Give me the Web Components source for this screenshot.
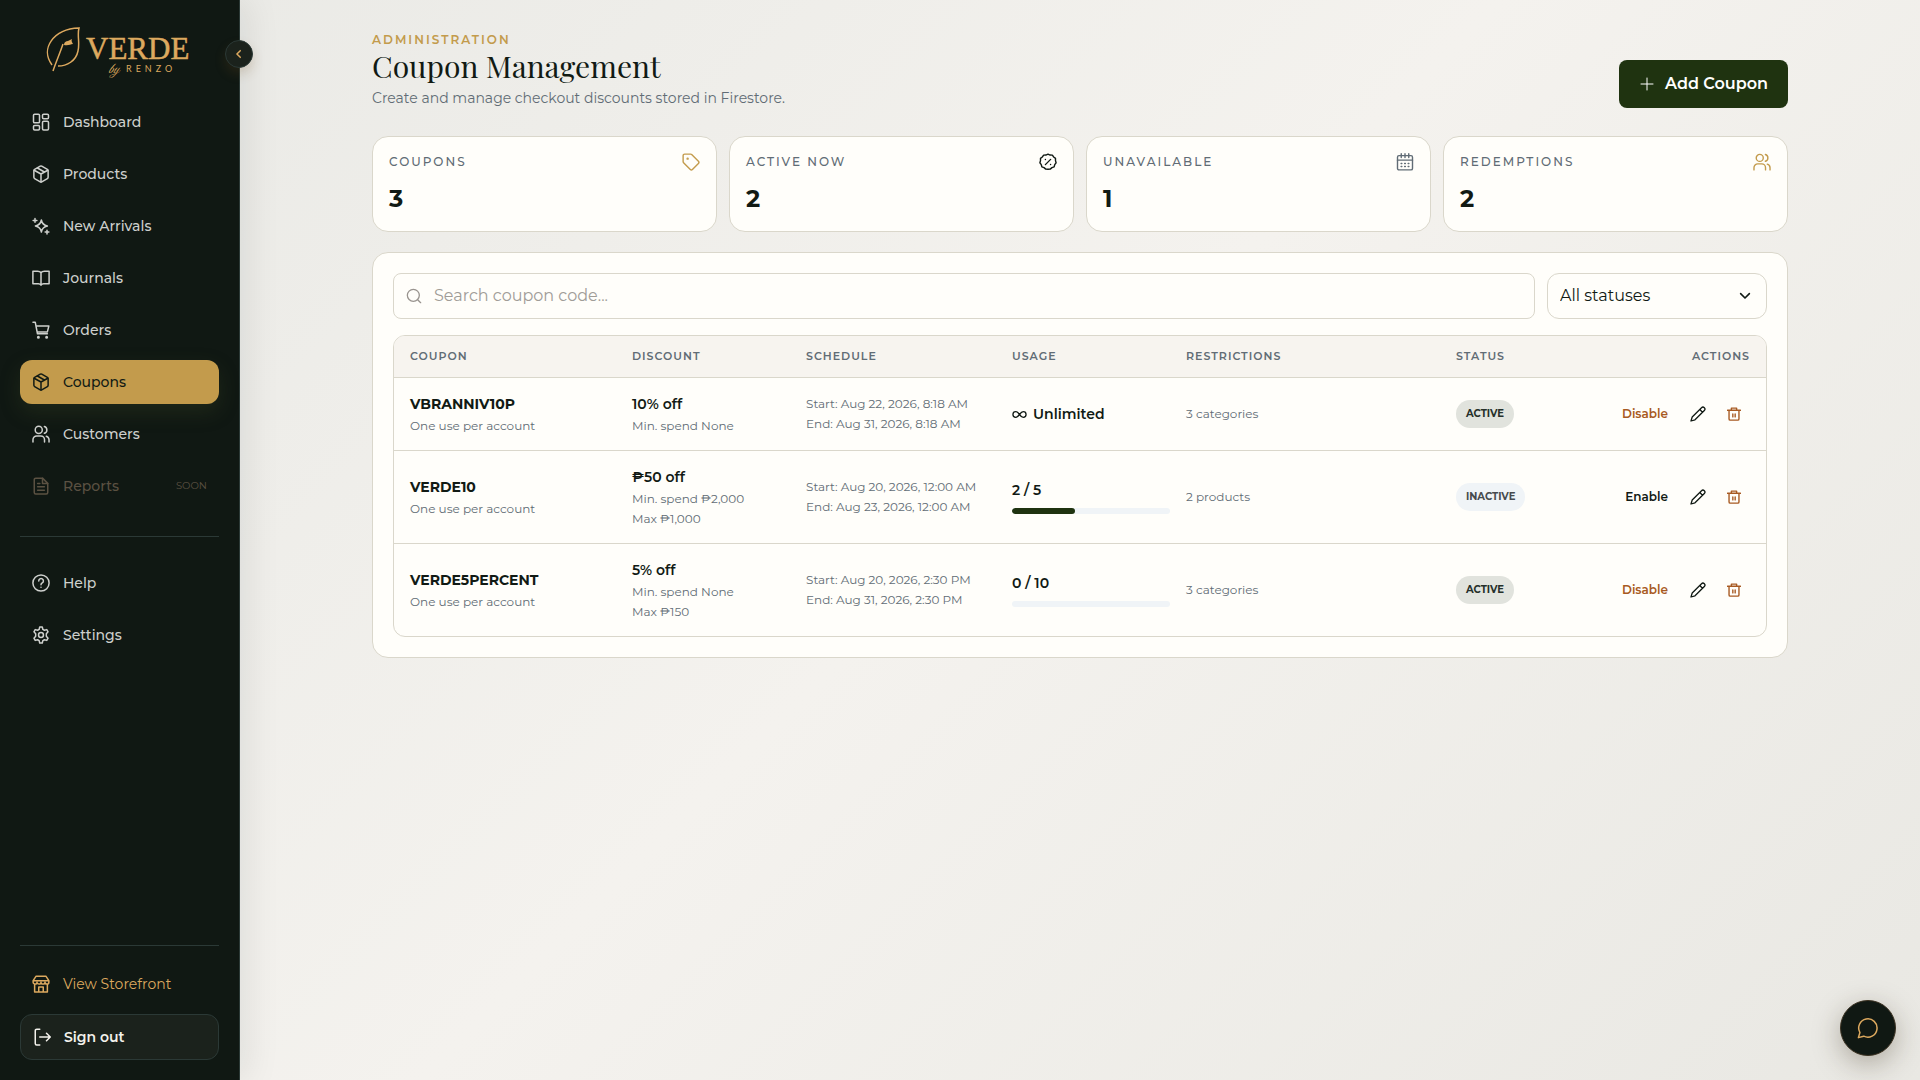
<!DOCTYPE html>
<html lang="en">
<head>
<meta charset="utf-8">
<meta name="viewport" content="width=device-width, initial-scale=1">
<title>Coupon Management - Verde by Renzo</title>
<style>
  :root {
    --ink: #111a14;
    --leaf: #1f3310;
    --gold: #c39b4c;
    --gold-light: #dda95f;
    --muted: #616c75;
    --line: #dad7cb;
    --card: #fffefa;
    --rust: #a85a22;
    --mist: #f0f4f7;
  }

  body {
    margin: 0;
    color: var(--ink);
    font-family: Montserrat, Inter, "Open Sans", sans-serif;
    font-size: 14px;
    line-height: 20px;
  }
</style>
</head>
<body>

<admin-shell>
  <side-bar slot="sidebar">
    <nav-item icon="dashboard">Dashboard</nav-item>
    <nav-item icon="box">Products</nav-item>
    <nav-item icon="sparkles">New Arrivals</nav-item>
    <nav-item icon="book">Journals</nav-item>
    <nav-item icon="cart">Orders</nav-item>
    <nav-item icon="box" active>Coupons</nav-item>
    <nav-item icon="users">Customers</nav-item>
    <nav-item icon="file" disabled note="SOON">Reports</nav-item>
    <nav-item slot="support" icon="help">Help</nav-item>
    <nav-item slot="support" icon="gear">Settings</nav-item>
    <nav-item slot="footer" icon="store" gold>View Storefront</nav-item>
    <sign-out slot="footer">Sign out</sign-out>
  </side-bar>

  <page-header>
    <span slot="eyebrow">ADMINISTRATION</span>
    <span slot="title">Coupon Management</span>
    <span slot="lead">Create and manage checkout discounts stored in Firestore.</span>
    <span slot="action">Add Coupon</span>
  </page-header>

  <stat-row>
    <stat-card icon="tag" tone="gold" value="3">COUPONS</stat-card>
    <stat-card icon="percent" tone="ink" value="2">ACTIVE NOW</stat-card>
    <stat-card icon="calendar" tone="muted" value="1">UNAVAILABLE</stat-card>
    <stat-card icon="users" tone="gold" value="2">REDEMPTIONS</stat-card>
  </stat-row>

  <coupon-panel>
    <coupon-filters></coupon-filters>
    <coupon-table></coupon-table>
  </coupon-panel>

  <chat-button slot="floating"></chat-button>
</admin-shell>

<script>
const icons = {
  dashboard: '<rect x="2" y="1.500" width="8" height="11.500" rx="1.500"/><rect x="14" y="1.500" width="8" height="6" rx="1.500"/><rect x="14" y="11" width="8" height="11.500" rx="1.500"/><rect x="2" y="16.500" width="8" height="6" rx="1.500"/>',
  box: '<path d="M11 1.500a2 2 0 0 1 2 0l7.500 4.400a2 2 0 0 1 1 1.700v8.800a2 2 0 0 1-1 1.700L13 22.500a2 2 0 0 1-2 0l-7.500-4.400a2 2 0 0 1-1-1.700V7.600a2 2 0 0 1 1-1.700z"/><path d="M2.900 7 12 12l9.100-5M12 12v10.600M7.200 4l9.300 5.300"/>',
  sparkles: '<path d="M12.500 4c1 5.200 2.800 7 8 8-5.200 1-7 2.800-8 8-1-5.200-2.800-7-8-8 5.200-1 7-2.800 8-8z"/><path d="M4 2v5M1.500 4.500h5M20 17.500v5M17.500 20h5"/>',
  book: '<path d="M12 5C11 3.500 9.500 3 7.500 3H1.200v16.500h7.300c1.700 0 2.800.6 3.500 2 .7-1.400 1.800-2 3.500-2h7.300V3h-6.300c-2 0-3.500.5-4.500 2zM12 5v16.500"/>',
  cart: '<path d="M1.300 1.500h3l3 15.500h13.200M5.200 6.500h17.300l-2 8H6.900"/><circle cx="8.500" cy="21.500" r="1"/><circle cx="19.500" cy="21.500" r="1"/>',
  users: '<circle cx="9" cy="6.500" r="4.700"/><path d="M1.300 22.500v-3a5 5 0 0 1 5-5h5.400a5 5 0 0 1 5 5v3M16.500 2a4.700 4.700 0 0 1 0 9M19 14.900a5 5 0 0 1 3.700 4.600v3"/>',
  file: '<path d="M14 1.500H5a2 2 0 0 0-2 2v17a2 2 0 0 0 2 2h14a2 2 0 0 0 2-2V8.500z"/><path d="M14 1.500v7h7M7.500 8.500h3M7.500 13h9M7.500 17.500h9"/>',
  help: '<circle cx="12" cy="12" r="10.800"/><path d="M9 9.200a3.100 3.100 0 1 1 4.700 2.700c-1.100.7-1.700 1.200-1.700 2.300M12 17.500v.3"/>',
  gear: '<path d="M10.300 1.300h3.400l.8 3.300 2 1.100 3.200-.9 1.700 3-2.300 2.500v3.400l2.300 2.500-1.700 3-3.200-.9-2 1.100-.8 3.300h-3.400l-.8-3.300-2-1.100-3.200.9-1.700-3 2.300-2.500v-3.400L2.600 7.800l1.700-3 3.200.9 2-1.100z"/><circle cx="12" cy="12" r="3.300"/>',
  store: '<path d="M5.500 1.500h13l4 6v2a2.600 2.600 0 0 1-5.200 0 2.600 2.600 0 0 1-5.300 0 2.600 2.600 0 0 1-5.300 0 2.600 2.600 0 0 1-5.200 0v-2zM1.500 7.500h21M3.500 12.500v10h17v-10M9 22.500V16h6v6.500"/>',
  signout: '<path d="M9 1.500H5a2 2 0 0 0-2 2v17a2 2 0 0 0 2 2h4M9 12h14M18 7l5 5-5 5"/>',
  tag: '<path d="M1.500 3.500a2 2 0 0 1 2-2h8a2 2 0 0 1 1.400.6l9 9a2 2 0 0 1 0 2.800l-8 8a2 2 0 0 1-2.800 0l-9-9a2 2 0 0 1-.6-1.400z"/><circle cx="7.500" cy="7.500" r=".7"/>',
  percent: '<path d="M12 1.500 14.800 2.700 17.800 2.800 19.600 5.300 22 7.200 22 10.200 22.800 13 21 15.500 20.200 18.400 17.300 19.500 15 21.500 12 21.600 9 21.500 6.700 19.500 3.800 18.400 3 15.500 1.200 13 2 10.200 2 7.200 4.400 5.300 6.200 2.800 9.200 2.700z"/><path d="m8.500 15.500 7-7M8.500 8.700h.1M15.400 15.300h.1"/>',
  calendar: '<rect x="2" y="3.500" width="20" height="19" rx="2"/><path d="M7 1v5M12 1v5M17 1v5M2 9.500h20"/><path d="M6.800 14h1M11.500 14h1M16.200 14h1M6.800 18h1M11.500 18h1M16.200 18h1"/>',
  search: '<circle cx="11" cy="11" r="9"/><path d="m17.500 17.500 4.500 4.500"/>',
  plus: '<path d="M12 3v18M3 12h18"/>',
  infinity: '<path d="M12 12C9.500 8.500 8 7.500 6 7.500a4.500 4.500 0 0 0 0 9c2 0 3.500-1 6-4.500s4-4.500 6-4.500a4.500 4.500 0 0 1 0 9c-2 0-3.500-1-6-4.500z"/>',
  pencil: '<path d="M1.500 22.500 3.300 16.500 17.300 2.500a2.900 2.900 0 0 1 4.200 4.200L7.500 20.700zM14.700 5.200l4.100 4.100"/>',
  trash: '<path d="M1 5.500h22M7.500 5.500v-3.500h9v3.500M3.500 5.500V20.500a2 2 0 0 0 2 2h13a2 2 0 0 0 2-2V5.500M10 12v5M14 12v5"/>',
  chat: '<path d="M1.500 22.500 3.200 17A10 10 0 1 1 7.300 20.900z"/>',
  left: '<path d="m15 4-8 8 8 8"/>',
  down: '<path d="m4.500 8 7.500 7.500L19.500 8"/>'
};

// size and stroke are given in px; the path data uses a 24 unit box
function icon(name, size = 18, stroke = 1.5) {
  return `<svg width="${size}" height="${size}" viewBox="0 0 24 24" fill="none" stroke="currentColor" stroke-width="${stroke * 24 / size}" stroke-linecap="round" stroke-linejoin="round" aria-hidden="true">${icons[name]}</svg>`;
}

const baseStyle = `
  :host, * { box-sizing: border-box; }
  svg { display: block; flex: none; }
  button, input, select { font: inherit; color: inherit; margin: 0; }
  button { cursor: pointer; }
`;

class BaseElement extends HTMLElement {
  connectedCallback() {
    if (this.shadowRoot) return;
    this.attachShadow({ mode: 'open' });
    this.shadowRoot.innerHTML = `<style>${baseStyle}</style>${this.template()}`;
  }
}

class AdminShell extends BaseElement {
  template() {
    return `
      <style>
        :host {
          display: flex;
          min-height: 100vh;
          background: linear-gradient(135deg, #e9e9e5 0%, #f4f2ee 50%, #e9e8e3 100%);
        }
        main { flex: 1; min-width: 0; }
        .content {
          display: flex;
          flex-direction: column;
          gap: 20px;
          max-width: 1480px;
          margin: 0 auto;
          padding: 32px;
        }
      </style>
      <slot name="sidebar"></slot>
      <main><div class="content"><slot></slot></div></main>
      <slot name="floating"></slot>
    `;
  }
}

class SideBar extends BaseElement {
  template() {
    return `
      <style>
        :host {
          display: flex;
          flex-direction: column;
          flex: none;
          position: sticky;
          top: 0;
          width: 240px;
          height: 100vh;
          padding: 20px;
          background: #101813;
          border-right: 1px solid #2b3936;
          box-shadow: 8px 0 32px rgba(17, 26, 20, .08);
        }
        .logo { display: block; height: 64px; margin: 0 auto 16px; }
        .logo svg { width: 152px; height: 64px; }
        nav { display: flex; flex-direction: column; gap: 8px; }
        .support { margin-top: 28px; padding-top: 24px; border-top: 1px solid #2b3936; }
        .footer {
          display: flex;
          flex-direction: column;
          gap: 8px;
          margin-top: auto;
          padding-top: 16px;
          border-top: 1px solid #2b3936;
        }
        .collapse {
          position: absolute;
          top: 40px;
          right: -14px;
          display: grid;
          place-items: center;
          width: 28px;
          height: 28px;
          padding: 0;
          color: var(--gold-light);
          background: #1b221c;
          border: 1px solid #2b3936;
          border-radius: 50%;
          box-shadow: 0 6px 12px rgba(120, 80, 30, .2);
        }
      </style>
      <a class="logo" href="#" aria-label="Verde by Renzo">
        <svg viewBox="0 0 152 64" fill="#dda95f">
          <path d="M8 45C-4 29 9 9 35 8c-2 7 1 15-1 23-2 10-11 15-20 15" fill="none" stroke="#dda95f" stroke-width="1.500"/>
          <path d="M9 51C12 42 16 33 19 24" fill="none" stroke="#dda95f" stroke-width="1.500"/>
          <path d="M20 25c0-3 2-4 4-4l4-2c-1 2 0 3 1 5-3 0-4 2-9 1z"/>
          <text x="42" y="39" font-family="'Liberation Serif', serif" font-size="31" stroke="#dda95f" stroke-width=".5">VERDE</text>
          <text x="64" y="53" font-family="'Great Vibes', 'Dancing Script', 'Liberation Serif', cursive" font-style="italic" font-size="15">by</text>
          <text x="82" y="52" font-family="Lato, sans-serif" font-size="9" letter-spacing="4">RENZO</text>
        </svg>
      </a>
      <nav aria-label="Main"><slot></slot></nav>
      <nav class="support" aria-label="Support"><slot name="support"></slot></nav>
      <div class="footer"><slot name="footer"></slot></div>
      <button class="collapse" aria-label="Collapse sidebar">${icon('left', 10)}</button>
    `;
  }
}

class NavItem extends BaseElement {
  template() {
    const note = this.getAttribute('note');
    return `
      <style>
        :host { display: block; }
        a {
          display: flex;
          align-items: center;
          gap: 13px;
          height: 44px;
          padding: 0 12px;
          color: #ced0cd;
          font-size: 14px;
          font-weight: 500;
          text-decoration: none;
          border-radius: 12px;
        }
        small { margin-left: auto; font-size: 10px; font-weight: 400; }
        :host([active]) a {
          color: var(--ink);
          background: var(--gold);
          box-shadow: 0 8px 20px rgba(70, 80, 40, .28);
        }
        :host([disabled]) a { color: #5b5142; }
        :host([gold]) a { color: var(--gold-light); font-weight: 400; }
      </style>
      <a href="#"${this.hasAttribute('active') ? ' aria-current="page"' : ''}>
        ${icon(this.getAttribute('icon'))}
        <slot></slot>
        ${note ? `<small>${note}</small>` : ''}
      </a>
    `;
  }
}

class SignOut extends BaseElement {
  template() {
    return `
      <style>
        :host { display: block; }
        button {
          display: flex;
          align-items: center;
          gap: 13px;
          width: 100%;
          height: 46px;
          padding: 0 12px;
          color: #f4f2ec;
          background: #1b221c;
          border: 1px solid #2b3936;
          border-radius: 12px;
          font-size: 14px;
          font-weight: 600;
        }
      </style>
      <button>${icon('signout')}<slot></slot></button>
    `;
  }
}

class PageHeader extends BaseElement {
  template() {
    return `
      <style>
        :host {
          display: flex;
          justify-content: space-between;
          align-items: flex-end;
          margin-bottom: 8px;
        }
        p, h1 { margin: 0; }
        .eyebrow { color: var(--gold); font-size: 12px; line-height: 16px; font-weight: 600; letter-spacing: 2px; }
        h1 { font: 400 30px/36px "Playfair Display", "Liberation Serif", serif; }
        .lead { margin-top: 4px; color: var(--muted); font-size: 14px; }
        button {
          display: flex;
          align-items: center;
          gap: 10px;
          height: 48px;
          padding: 0 20px;
          color: #fff;
          background: var(--leaf);
          border: 0;
          border-radius: 8px;
          font-size: 16px;
          font-weight: 600;
        }
      </style>
      <div>
        <p class="eyebrow"><slot name="eyebrow"></slot></p>
        <h1><slot name="title"></slot></h1>
        <p class="lead"><slot name="lead"></slot></p>
      </div>
      <button>${icon('plus', 16, 1)}<slot name="action"></slot></button>
    `;
  }
}

class StatRow extends BaseElement {
  template() {
    return `
      <style>
        :host { display: grid; grid-template-columns: repeat(4, 1fr); gap: 12px; }
      </style>
      <slot></slot>
    `;
  }
}

class StatCard extends BaseElement {
  template() {
    return `
      <style>
        :host {
          display: flex;
          flex-direction: column;
          gap: 12px;
          padding: 16px;
          background: var(--card);
          border: 1px solid var(--line);
          border-radius: 16px;
        }
        .top { display: flex; justify-content: space-between; align-items: center; height: 18px; }
        .label { color: var(--muted); font-size: 12px; font-weight: 500; letter-spacing: 2px; }
        .icon { color: var(--${this.getAttribute('tone')}); }
        strong { font-size: 24px; line-height: 32px; font-weight: 700; }
      </style>
      <div class="top">
        <span class="label"><slot></slot></span>
        <span class="icon">${icon(this.getAttribute('icon'), 18, 1.4)}</span>
      </div>
      <strong>${this.getAttribute('value')}</strong>
    `;
  }
}

class CouponPanel extends BaseElement {
  template() {
    return `
      <style>
        :host {
          display: flex;
          flex-direction: column;
          gap: 16px;
          padding: 20px;
          background: var(--card);
          border: 1px solid var(--line);
          border-radius: 16px;
        }
      </style>
      <slot></slot>
    `;
  }
}

class CouponFilters extends BaseElement {
  template() {
    return `
      <style>
        :host { display: flex; gap: 12px; font-size: 16px; }
        label {
          display: flex;
          align-items: center;
          height: 46px;
          border: 1px solid var(--line);
        }
        .search { flex: 1; gap: 12px; padding: 0 12px; border-radius: 8px; color: #99948f; }
        .status { position: relative; width: 220px; border-radius: 12px; }
        input { flex: 1; min-width: 0; padding: 0; border: 0; outline: 0; background: none; color: var(--ink); }
        input::placeholder { color: #a09c97; opacity: 1; }
        select {
          width: 100%;
          height: 100%;
          padding: 0 40px 0 12px;
          border: 0;
          outline: 0;
          background: none;
          appearance: none;
        }
        .status svg { position: absolute; right: 14px; pointer-events: none; }
      </style>
      <label class="search">
        ${icon('search', 16, 1.3)}
        <input type="search" placeholder="Search coupon code..." aria-label="Search coupon code">
      </label>
      <label class="status">
        <select aria-label="Status">
          <option>All statuses</option>
          <option>Active</option>
          <option>Inactive</option>
        </select>
        ${icon('down', 14, 1.6)}
      </label>
    `;
  }
}

const coupons = [
  {
    code: 'VBRANNIV10P', rule: 'One use per account',
    discount: '10% off', limits: ['Min. spend None'],
    start: 'Aug 22, 2026, 8:18 AM', end: 'Aug 31, 2026, 8:18 AM',
    used: 0, max: 0, restrictions: '3 categories', active: true
  },
  {
    code: 'VERDE10', rule: 'One use per account',
    discount: '₱50 off', limits: ['Min. spend ₱2,000', 'Max ₱1,000'],
    start: 'Aug 20, 2026, 12:00 AM', end: 'Aug 23, 2026, 12:00 AM',
    used: 2, max: 5, restrictions: '2 products', active: false
  },
  {
    code: 'VERDE5PERCENT', rule: 'One use per account',
    discount: '5% off', limits: ['Min. spend None', 'Max ₱150'],
    start: 'Aug 20, 2026, 2:30 PM', end: 'Aug 31, 2026, 2:30 PM',
    used: 0, max: 10, restrictions: '3 categories', active: true
  }
];

class CouponTable extends BaseElement {
  usage(c) {
    if (!c.max) {
      return `<div class="main unlimited">${icon('infinity', 15, 1.3)}Unlimited</div>`;
    }
    return `
      <div class="main">${c.used} / ${c.max}</div>
      <div class="bar"><i style="width:${c.used / c.max * 100}%"></i></div>
    `;
  }

  row(c) {
    return `
      <tr>
        <td><div class="main code">${c.code}</div><div class="sub">${c.rule}</div></td>
        <td><div class="main">${c.discount}</div>${c.limits.map(l => `<div class="sub">${l}</div>`).join('')}</td>
        <td><div class="sub">Start: ${c.start}</div><div class="sub">End: ${c.end}</div></td>
        <td>${this.usage(c)}</td>
        <td><div class="sub">${c.restrictions}</div></td>
        <td><span class="pill ${c.active ? 'on' : ''}">${c.active ? 'ACTIVE' : 'INACTIVE'}</span></td>
        <td>
          <div class="actions">
            <button class="toggle ${c.active ? 'rust' : ''}">${c.active ? 'Disable' : 'Enable'}</button>
            <button class="tool" aria-label="Edit ${c.code}">${icon('pencil', 16, 1.3)}</button>
            <button class="tool rust" aria-label="Delete ${c.code}">${icon('trash', 14, 1.4)}</button>
          </div>
        </td>
      </tr>
    `;
  }

  template() {
    return `
      <style>
        :host {
          display: block;
          overflow: hidden;
          border: 1px solid var(--line);
          border-radius: 12px;
        }
        table { width: 100%; table-layout: fixed; border-collapse: separate; border-spacing: 0; }
        th {
          padding: 12px 0 12px 16px;
          color: var(--muted);
          background: #f7f4ef;
          border-bottom: 1px solid var(--line);
          font-size: 11px;
          line-height: 17px;
          font-weight: 600;
          letter-spacing: 1px;
          text-align: left;
        }
        td { padding: 16px 0 16px 16px; vertical-align: middle; border-bottom: 1px solid var(--line); }
        tbody tr:last-child td { border-bottom: 0; }
        th:last-child, td:last-child { padding-right: 16px; text-align: right; }
        .main { font-size: 14px; line-height: 20px; font-weight: 600; }
        .code { font-weight: 700; }
        .sub { color: var(--muted); font-size: 12px; line-height: 16px; }
        div + .sub { margin-top: 4px; }
        .unlimited { display: flex; align-items: center; gap: 6px; }
        .bar { height: 6px; margin-top: 8px; overflow: hidden; background: var(--mist); border-radius: 3px; }
        .bar i { display: block; height: 100%; background: var(--leaf); border-radius: 3px; }
        .pill {
          display: inline-block;
          padding: 0 10px;
          color: #474b4e;
          background: var(--mist);
          border-radius: 14px;
          font-size: 10px;
          line-height: 28px;
          font-weight: 700;
          vertical-align: middle;
        }
        .pill.on { color: #26302a; background: #e1e3dd; }
        .actions { display: flex; justify-content: flex-end; align-items: center; gap: 4px; }
        button { height: 32px; padding: 0; background: none; border: 0; }
        .toggle { padding: 0 10px; font-size: 12px; font-weight: 600; }
        .tool { display: grid; place-items: center; width: 32px; }
        .rust { color: var(--rust); }
      </style>
      <table>
        <colgroup>
          <col style="width:222px"><col style="width:174px"><col style="width:206px"><col style="width:174px">
          <col style="width:270px"><col style="width:120px"><col style="width:206px">
        </colgroup>
        <thead>
          <tr><th>COUPON</th><th>DISCOUNT</th><th>SCHEDULE</th><th>USAGE</th><th>RESTRICTIONS</th><th>STATUS</th><th>ACTIONS</th></tr>
        </thead>
        <tbody>${coupons.map(c => this.row(c)).join('')}</tbody>
      </table>
    `;
  }
}

class ChatButton extends BaseElement {
  template() {
    return `
      <style>
        :host { position: fixed; right: 24px; bottom: 24px; }
        button {
          display: grid;
          place-items: center;
          width: 56px;
          height: 56px;
          padding: 0;
          color: var(--gold-light);
          background: #101813;
          border: 1px solid #3a3020;
          border-radius: 50%;
          box-shadow: 0 8px 28px rgba(60, 50, 30, .35);
        }
      </style>
      <button aria-label="Open chat">${icon('chat', 22, 1.5)}</button>
    `;
  }
}

customElements.define('admin-shell', AdminShell);
customElements.define('side-bar', SideBar);
customElements.define('nav-item', NavItem);
customElements.define('sign-out', SignOut);
customElements.define('page-header', PageHeader);
customElements.define('stat-row', StatRow);
customElements.define('stat-card', StatCard);
customElements.define('coupon-panel', CouponPanel);
customElements.define('coupon-filters', CouponFilters);
customElements.define('coupon-table', CouponTable);
customElements.define('chat-button', ChatButton);
</script>
</body>
</html>
